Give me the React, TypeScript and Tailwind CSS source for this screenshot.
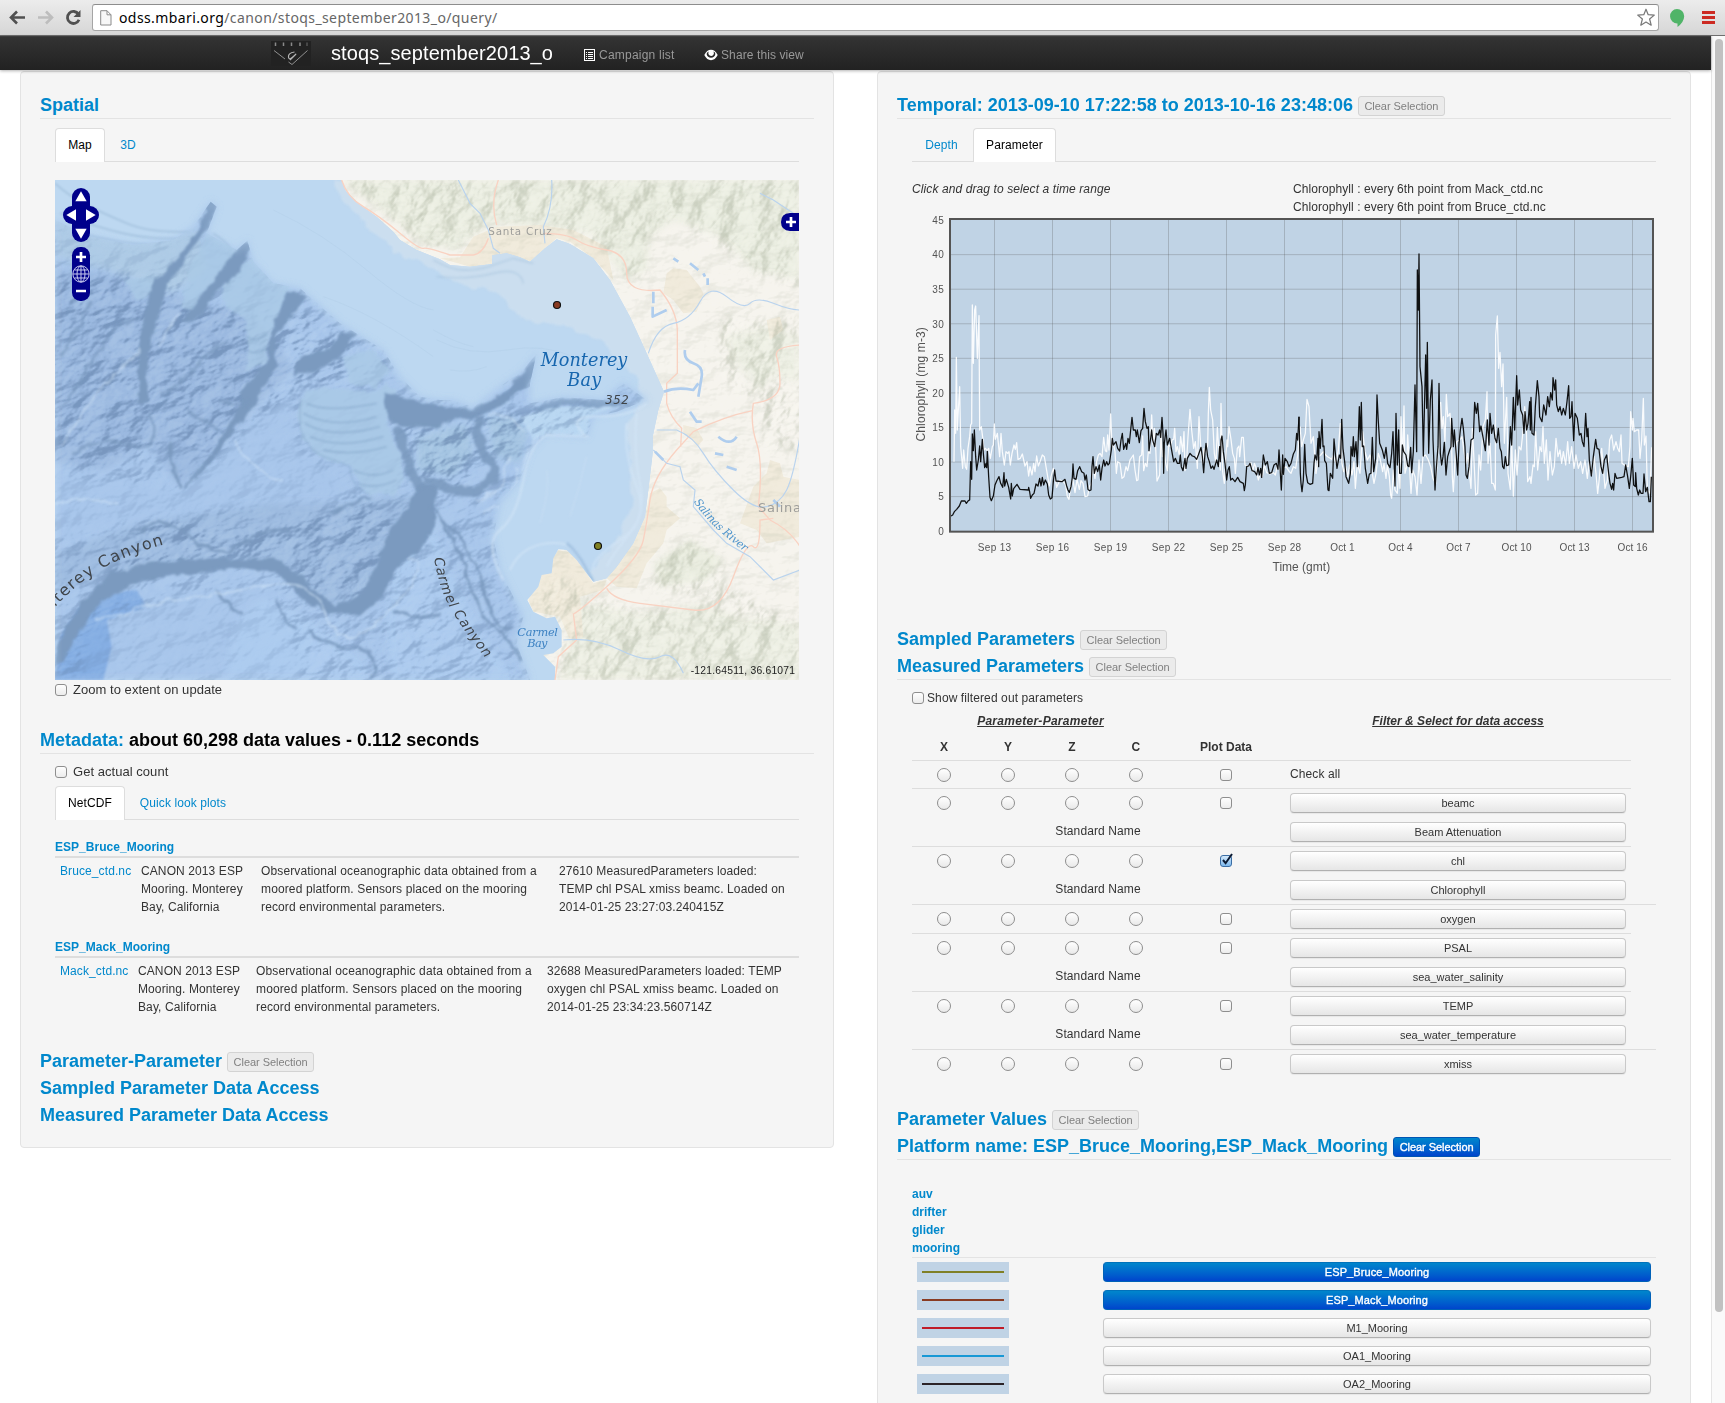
import React from "react";

const BLACK_A =
  "153,948 158,945 163,935 170,928 178,918 184,903 195,903 199,910 205,902 209,900 212,785 215,838 217,702 220,752 223,690 227,770 230,810 235,780 239,738 242,785 247,718 250,760 254,803 258,790 260,803 262,754 266,830 270,892 274,902 280,888 285,855 290,843 297,830 302,850 308,862 312,818 314,858 319,838 326,862 332,897 334,850 337,888 341,866 351,853 360,868 385,870 386,862 389,876 392,895 397,885 402,880 408,852 414,858 419,835 423,858 427,832 431,855 436,840 442,852 446,885 451,897 456,893 460,845 464,810 468,843 486,845 495,838 500,858 504,870 508,877 513,860 517,832 519,792 522,835 528,838 533,812 539,800 545,815 552,820 555,840 559,825 564,868 568,872 573,870 576,800 579,770 583,820 588,800 593,815 598,795 602,840 606,805 611,780 615,798 620,785 624,795 628,790 634,750 637,715 640,735 648,725 653,745 659,753 663,720 667,700 671,748 677,730 680,748 684,715 688,730 692,690 696,652 700,690 706,690 709,710 712,690 718,728 723,692 728,685 732,625 736,665 741,685 745,680 747,752 752,715 755,690 758,720 764,740 769,700 774,705 779,690 782,712 786,652 789,700 791,820 793,730 798,690 802,735 809,715 814,745 821,785 826,775 832,790 838,790 841,765 844,800 849,812 855,775 858,805 862,775 870,760 877,768 883,770 890,778 895,765 903,742 907,770 911,818 915,760 918,730 923,770 928,785 933,805 938,798 942,808 950,780 955,800 959,740 961,785 963,720 966,708 970,755 975,790 980,840 984,810 988,800 992,840 997,835 1005,845 1013,832 1020,845 1030,850 1033,872 1036,855 1040,800 1046,798 1050,790 1056,812 1064,815 1070,825 1074,803 1078,825 1082,805 1085,832 1088,790 1090,765 1096,795 1102,785 1108,820 1115,818 1122,795 1129,790 1134,808 1137,750 1140,800 1144,870 1148,765 1150,823 1155,775 1162,785 1167,800 1173,790 1180,762 1186,750 1190,700 1193,720 1197,650";
const BLACK_B =
  "-3,650 1,820 3,850 6,875 10,840 14,733 18,820 23,848 30,853 38,850 42,790 45,765 50,780 54,715 56,800 57,695 61,745 66,658 69,740 72,738 74,782 79,790 84,870 87,872 91,820 98,835 102,717 107,770 111,805 118,765 122,775 125,658 129,745 134,785 138,830 146,850 151,820 153,740 157,768 160,710 163,770 168,725 172,800 178,620 181,720 184,607 187,740 191,738 196,805 203,850 208,822 213,820 217,712 221,815 227,775 231,585 235,665 239,730 247,750 253,775 258,742 263,790 270,803 275,760 279,695 282,780 285,858 288,640 292,795 296,690 299,820 304,820 307,735 311,755 318,765 323,797 327,800 332,742 335,818 340,755 345,555 350,755 352,210 355,330 357,162 360,500 366,560 370,768 377,465 380,625 382,427 386,760 391,600 396,540 399,720 405,870 409,805 414,740 417,550 421,760 425,795 429,770 433,727 438,825 443,770 449,750 453,740 455,655 460,740 463,690 467,740 473,825 477,730 481,690 486,655 490,685 495,740 498,825 502,835 507,800 513,720 520,715 524,607 529,640 533,610 539,695 543,678 549,712 556,752 562,660 567,735 570,640 575,700 580,675 585,715 590,728 595,685 600,745 604,755 608,800 612,806 616,770 620,797 626,795 631,680 635,735 640,592 644,690 650,527 653,615 658,570 662,630 668,645 672,700 675,635 680,690 684,670 689,605 691,690 693,592 696,700 702,705 706,620 712,542 717,590 719,650 726,665 731,615 738,645 743,590 748,620 752,578 757,600 759,533 764,570 767,540 770,615 775,635 780,620 785,645 790,625 796,645 801,605 806,557 809,655 813,650 816,605 821,722 825,640 832,655 838,705 843,700 847,725 852,740 857,640 861,710 864,685 868,780 874,828 880,770 887,718 891,745 897,748 903,800 908,820 913,780 920,765 926,820 930,850 935,868 938,850 941,870 945,820 950,835 965,832 972,830 977,795 983,830 988,865 992,830 997,775 1001,855 1006,860 1007,818 1010,865 1015,885 1019,870 1023,880 1029,880 1032,822 1037,875 1042,862 1047,905 1051,905 1054,830";
const WHITE_A =
  "162,785 164,630 167,700 169,472 172,690 175,630 179,560 182,740 188,805 191,750 196,800 200,808 204,745 209,710 212,675 215,670 217,315 220,490 224,330 227,318 232,475 237,347 239,690 244,680 249,720 252,750 256,745 262,752 266,745 271,775 277,740 280,735 283,672 286,718 292,700 299,770 303,700 307,755 313,795 318,755 323,760 327,755 331,795 336,760 342,735 346,748 350,728 354,778 361,775 367,762 375,798 381,785 386,828 390,800 396,825 401,790 405,815 410,768 415,798 420,785 427,765 433,770 438,800 444,835 448,858 453,830 460,805 466,838 470,862 480,840 490,845 497,855 502,890 507,898 512,860 518,835 525,878 531,838 538,868 543,842 549,850 555,890 563,888 568,860 574,850 580,798 585,835 590,785 595,765 600,760 606,770 611,712 616,752 620,755 623,705 627,750 632,642 636,740 640,730 645,755 649,820 653,785 660,790 666,835 672,830 678,800 683,812 690,780 700,765 705,810 710,842 714,840 719,770 725,765 728,708 731,812 736,790 741,800 745,755 750,760 755,645 759,735 763,685 767,740 771,843 779,825 783,700 787,770 791,745 797,790 802,812 806,735 812,740 816,720 821,718 824,685 828,755 832,740 838,765 842,710 848,755 852,695 855,812 860,780 864,710 870,628 875,690 881,745 886,725 892,805 897,650 903,755 908,790 912,745 917,760 923,735 925,640 928,562 932,630 938,660 943,760 948,790 952,682 957,760 961,810 963,610 968,815 973,850 978,765 981,720 983,740 987,680 993,718 998,760 1003,775 1006,820 1012,745 1017,738 1019,770 1025,712 1030,712 1035,795 1045,800 1053,788 1058,815 1063,790 1067,800 1075,840 1081,820 1087,830 1093,795 1100,818 1110,822 1120,818 1126,825 1133,795 1140,812 1145,825 1150,805 1158,800 1168,815 1173,820 1180,800 1187,805 1193,765 1200,680";
const WHITE_B =
  "0,680 5,740 10,720 16,700 21,598 27,620 33,730 40,710 48,820 55,770 62,765 70,755 77,765 83,770 95,778 100,765 108,790 115,750 121,670 126,790 131,815 137,800 143,830 149,795 156,825 162,785 166,865 172,790 180,820 188,695 195,755 202,780 210,765 216,815 222,850 228,820 235,760 240,775 248,815 252,790 258,835 262,795 268,830 272,885 275,895 280,810 285,870 292,880 297,790 300,865 303,650 308,780 312,618 315,820 320,800 323,705 328,790 333,880 338,810 345,830 351,885 357,780 363,850 369,770 377,765 385,780 392,800 399,835 407,850 414,755 419,740 422,607 426,685 430,650 435,725 439,583 443,650 450,640 454,700 457,830 460,875 465,780 470,725 478,720 486,710 493,760 498,790 503,760 508,820 513,865 517,685 520,740 527,885 533,880 537,765 542,810 549,680 556,660 561,575 564,790 570,730 575,850 580,850 586,870 587,405 592,348 596,505 600,457 605,560 609,492 613,730 620,592 624,820 631,868 635,720 640,888 646,750 651,825 657,740 663,750 670,685 674,620 679,690 683,845 690,830 693,850 699,795 703,800 707,695 713,810 720,740 725,755 729,680 733,790 739,720 744,840 750,755 757,825 763,800 768,715 774,770 780,750 785,790 790,755 797,795 803,725 808,790 815,740 822,805 828,765 835,805 842,785 848,820 855,780 862,835 868,785 875,825 882,770 888,820 893,880 898,835 905,745 909,790 915,865 922,840 929,720 935,705 941,750 948,725 953,745 958,755 963,705 966,790 973,795 985,800 990,740 992,635 997,690 999,655 1003,695 1010,690 1016,690 1020,775 1025,720 1030,595 1033,735 1038,708 1042,870 1050,880 1055,742";

const Y_TICKS = [0, 5, 10, 15, 20, 25, 30, 35, 40, 45];
const X_TICKS = ["Sep 13", "Sep 16", "Sep 19", "Sep 22", "Sep 25", "Sep 28", "Oct 1", "Oct 4", "Oct 7", "Oct 10", "Oct 13", "Oct 16"];

function Chart() {
  return (
    <svg width="750" height="384" viewBox="36 48 2250 1152" className="block tracking-normal font-['Liberation_Sans',sans-serif]">
      <rect x="150" y="57" width="2109" height="938" fill="#c0d3e5" />
      <g stroke="#545454" strokeOpacity="0.27" strokeWidth="3">
        {Y_TICKS.slice(1, 9).map((v) => (
          <line key={v} x1="150" x2="2259" y1={993.5 - v * 20.74} y2={993.5 - v * 20.74} />
        ))}
        {X_TICKS.map((t, i) => (
          <line key={t} x1={283.5 + i * 174} x2={283.5 + i * 174} y1="57" y2="995" />
        ))}
      </g>
      <g fill="none" stroke="#ffffff" strokeOpacity="0.9" strokeWidth="3.8" strokeLinejoin="round">
        <polyline points={WHITE_A} />
        <polyline points={WHITE_B} transform="translate(1200 0)" />
      </g>
      <g fill="none" stroke="#000000" strokeOpacity="0.92" strokeWidth="3.8" strokeLinejoin="round">
        <polyline points={BLACK_A} />
        <polyline points={BLACK_B} transform="translate(1200 0)" />
      </g>
      <rect x="150" y="57" width="2109" height="938" fill="none" stroke="#545454" strokeWidth="6" />
      <g fill="#545454" fontSize="30">
        {Y_TICKS.map((v) => (
          <text key={v} x="132" y={1005 - v * 20.74} textAnchor="end" letterSpacing="0.8">
            {v}
          </text>
        ))}
        {X_TICKS.map((t, i) => (
          <text key={t} x={283.5 + i * 174} y="1053" textAnchor="middle" textLength={i < 6 ? 100 : i < 9 ? 73 : 90}>
            {t}
          </text>
        ))}
        <text x="1204" y="1112" textAnchor="middle" fontSize="36" textLength="173">
          Time (gmt)
        </text>
        <text transform="translate(75 553) rotate(-90)" textAnchor="middle" fontSize="36" textLength="343">
          Chlorophyll (mg m-3)
        </text>
      </g>
    </svg>
  );
}

const OCEAN =
  "M45 30H905L915 60 960 105 1010 140 1060 185 1080 210 1130 240 1200 268 1230 285 1290 290 1356 282 1357 256 1400 250 1440 262 1470 275 1515 235 1550 208 1590 222 1660 265 1710 330 1770 440 1820 550 1872 665 1855 720 1838 800 1838 850 1825 960 1815 1040 1780 1120 1730 1190 1700 1225 1660 1235 1640 1210 1610 1170 1580 1140 1555 1138 1540 1165 1535 1210 1505 1215 1495 1250 1462 1290 1480 1325 1520 1345 1545 1340 1565 1380 1565 1430 1540 1450 1510 1455 1545 1490 1545 1530H45Z";
const DEEP =
  "M45 150L150 200 280 225 400 210 460 170 512 95 530 110 500 190 590 240 622 212 640 275 700 340 780 355 900 460 1030 540 1080 620 1140 680 1200 690 1240 690 1300 712 1380 650 1450 600 1490 550 1470 640 1470 700 1570 682 1690 690 1750 640 1820 690 1730 725 1660 740 1640 800 1520 792 1470 840 1440 930 1380 1000 1360 1100 1380 1200 1450 1340 1430 1420 1470 1530H45Z";

function Terrain() {
  return (
    <>
      <defs>
        <clipPath id="oceanClip">
          <path transform="translate(-15 -10) scale(.33333)" d={OCEAN} />
        </clipPath>
        <clipPath id="deepClip">
          <path transform="translate(-15 -10) scale(.33333)" d={DEEP} />
        </clipPath>
        <filter id="soft8" x="-20%" y="-20%" width="140%" height="140%">
          <feGaussianBlur stdDeviation="10" />
        </filter>
        <filter id="soft3" x="-20%" y="-20%" width="140%" height="140%">
          <feGaussianBlur stdDeviation="3" />
        </filter>
        <filter id="rough" x="-10%" y="-10%" width="120%" height="120%" colorInterpolationFilters="sRGB">
          <feTurbulence type="fractalNoise" baseFrequency="0.025" numOctaves="3" seed="4" />
          <feDisplacementMap in="SourceGraphic" scale="26" xChannelSelector="R" yChannelSelector="G" />
          <feGaussianBlur stdDeviation="2.500" />
        </filter>
        <filter id="relief" x="0" y="0" width="100%" height="100%" colorInterpolationFilters="sRGB">
          <feTurbulence type="fractalNoise" baseFrequency="0.026 0.042" numOctaves="4" seed="11" result="n" />
          <feColorMatrix in="n" type="matrix" values="0 0 0 0 0 0 0 0 0 0 0 0 0 0 0 1 0 0 0 0" />
          <feDiffuseLighting surfaceScale="12" diffuseConstant="0.78" lightingColor="#ffffff" result="lit">
            <feDistantLight azimuth="240" elevation="42" />
          </feDiffuseLighting>
          <feColorMatrix in="lit" type="matrix" values="0 0 0 0 0.38 0 0 0 0 0.5 0 0 0 0 0.66 -1.9 0 0 0 0.94" result="dark" />
          <feColorMatrix in="lit" type="matrix" values="0 0 0 0 0.8 0 0 0 0 0.89 0 0 0 0 0.97 1.5 0 0 0 -0.85" result="light" />
          <feMerge>
            <feMergeNode in="dark" />
            <feMergeNode in="light" />
          </feMerge>
        </filter>
        <filter id="hills" x="0" y="0" width="100%" height="100%" colorInterpolationFilters="sRGB">
          <feTurbulence type="fractalNoise" baseFrequency="0.03 0.05" numOctaves="4" seed="23" result="n" />
          <feColorMatrix in="n" type="matrix" values="0 0 0 0 0 0 0 0 0 0 0 0 0 0 0 1 0 0 0 0" />
          <feDiffuseLighting surfaceScale="9" diffuseConstant="0.78" lightingColor="#ffffff" result="lit">
            <feDistantLight azimuth="225" elevation="42" />
          </feDiffuseLighting>
          <feColorMatrix in="lit" type="matrix" values="0 0 0 0 0.65 0 0 0 0 0.68 0 0 0 0 0.6 -1.6 0 0 0 0.84" result="dark" />
          <feColorMatrix in="lit" type="matrix" values="0 0 0 0 1 0 0 0 0 1 0 0 0 0 0.97 1.7 0 0 0 -0.92" result="light" />
          <feMerge>
            <feMergeNode in="dark" />
            <feMergeNode in="light" />
          </feMerge>
        </filter>
        <mask id="hillMask">
          <path
            transform="translate(-15 -10) scale(.33333)"
            fill="#fff"
            filter="url(#soft8)"
            d="M905 30H2280V360L2140 310 2060 240 1990 200 1930 150 1860 160 1800 260 1830 320 1780 340 1700 250 1640 210 1500 150 1350 150 1270 220 1150 230 1020 120ZM2040 440L2160 450 2280 430V860L2240 830 2180 860 2150 700 2080 660 2030 600ZM1850 1170L1960 1110 2050 1170 2060 1260 1960 1280 1830 1260ZM1470 1290L1540 1220 1600 1230 1650 1270 1800 1320 1960 1310 2060 1240 2160 1300 2280 1350V1530H1540L1580 1380Z"
          />
        </mask>
        <mask id="reliefMask" maskUnits="userSpaceOnUse" x="0" y="0" width="744" height="500">
          <rect width="744" height="500" fill="#999" />
          <g transform="translate(-15 -10) scale(.33333)" filter="url(#soft8)">
            <path fill="#fff" d="M45 330L360 340 500 420 740 400 900 480 1040 560 1000 640 800 640 640 740 500 860 400 800 300 860 45 900ZM320 1050L700 1080 1000 990 1060 1060 980 1280 840 1280 720 1150 400 1180 200 1230ZM1060 760L1330 740 1500 720 1480 800 1320 860 1280 960 1130 930Z" />
            <path fill="#444" d="M45 920L420 960 560 840 740 680 780 850 940 950 860 1010 500 1020 300 1060 45 1100ZM780 660H1060V960H960L800 840ZM130 1400L300 1300 640 1240 720 1300 780 1530H130ZM45 150H640L600 280 480 330 300 310 45 280Z" />
          </g>
        </mask>
      </defs>

      <rect width="744" height="500" fill="#f6f4ee" />

      <g transform="translate(-15 -10) scale(.33333)">
        <g filter="url(#soft8)" fill="#e9ecdf">
          <path d="M905 30H2280V330L2140 300 2040 200 1900 150 1830 200 1820 300 1760 330 1650 190 1350 160 1250 240 1150 220Z" opacity=".8" />
          <path d="M2050 500L2200 460 2280 500V640L2200 620 2160 660 2080 580Z" opacity=".6" />
          <path d="M1840 1180L1950 1110 2050 1170 2000 1230 1860 1250Z" />
          <path d="M1500 1270L1570 1230 1630 1300 1800 1330 1980 1300 2100 1340 2280 1360V1530H1560L1590 1380Z" opacity=".7" />
        </g>
        <g fill="#f0eadb">
          <path d="M1200 265L1260 262 1300 200 1370 170 1500 165 1600 180 1700 230 1720 330 1660 265 1590 215 1550 205 1470 275 1400 250 1356 258 1356 282 1290 290Z" />
          <path d="M1880 310L1900 295 1940 300 1980 350 1990 370 1970 425 1930 430 1900 390 1870 370Z" />
          <path d="M1830 970L1860 955 1880 980 1880 1010 1920 1045 1880 1080 1870 1120 1820 1180 1790 1255 1730 1250 1700 1225 1780 1120 1815 1040Z" />
          <path d="M2140 950L2180 910 2190 870 2220 880 2230 920 2280 930V1100L2180 1120 2150 1080 2100 1060Z" />
          <path d="M1555 1140L1600 1150 1640 1210 1660 1240 1700 1230 1690 1260 1620 1280 1630 1400 1590 1410 1560 1340 1480 1325 1465 1290 1500 1215Z" />
          <path d="M1930 765L1970 775 1990 810 1975 825 1930 790Z" />
          <path d="M2180 450L2220 440 2230 480 2190 510Z" />
        </g>
      </g>
      <g opacity=".18">
        <rect width="744" height="500" filter="url(#hills)" />
      </g>
      <g mask="url(#hillMask)" opacity=".5">
        <g transform="rotate(-50 560 80)">
          <rect x="50" y="-300" width="1000" height="900" filter="url(#hills)" />
        </g>
      </g>

      <g transform="translate(-15 -10) scale(.33333)">
        <path d={OCEAN} fill="#bdd8f1" />
      </g>
      <g clipPath="url(#oceanClip)">
        <g transform="translate(-15 -10) scale(.33333)">
          <path
            d="M880 30L900 80 960 150 1060 240 1200 305 1240 340 1370 365 1430 430 1460 455 1570 465 1680 510 1720 560 1790 620 1810 690 1760 760 1770 880 1775 1000 1730 1110 1650 1200 1690 1300 1900 1200 1950 600 1600 150 1300 240 1100 200 950 30Z"
            fill="#cbdeef"
            filter="url(#rough)"
          />
          <path d="M1180 270Q1240 305 1290 300T1360 285L1420 265 1480 280M1190 320Q1280 330 1360 310T1450 340" fill="none" stroke="#a5c3dd" strokeWidth="5" opacity=".5" filter="url(#soft3)" />
          <path d="M1180 480Q1250 520 1300 530M1190 510Q1290 560 1400 540T1600 560M1230 600Q1290 610 1340 590M700 120Q850 190 980 300T1180 420M850 380Q1000 430 1180 560" fill="none" stroke="#aecae5" strokeWidth="3" opacity=".35" />
          <path d={DEEP} fill="#a8c6eb" filter="url(#soft8)" />
          <g fill="none" stroke="#88a9c8" strokeWidth="5" opacity=".45" filter="url(#soft3)">
            <path d="M45 40Q90 80 140 105T260 160 450 185M60 130Q160 170 250 190T440 205M45 165Q170 210 300 222T460 225M45 200Q150 250 260 245T430 250M45 240Q160 280 260 265T400 275M45 275Q160 300 250 290T380 300" />
            <path d="M520 190Q600 240 560 270M500 240Q560 250 590 260M490 280Q540 300 560 290" />
          </g>
        </g>
        <g clipPath="url(#deepClip)">
          <g transform="translate(-15 -10) scale(.33333)">
            <path d="M45 300L200 310 380 350 460 400 620 420 700 500 760 600 640 720 520 860 420 950 320 820 200 900 45 880Z" fill="#9bb9e0" filter="url(#soft8)" />
            <path d="M500 1030L700 1000 900 1000 1050 980 1130 980 1040 1180 950 1290 870 1320 760 1230 700 1170 500 1180 300 1200 200 1230 45 1250V1150L300 1060Z" fill="#9dbbe0" filter="url(#soft8)" />
            <path d="M45 1530L60 1400 120 1310 200 1270 290 1260 320 1310 200 1350 215 1430 190 1530Z" fill="#85aee3" filter="url(#soft3)" />
            <path d="M45 120L300 210 480 180 500 300 400 370 200 300 45 260Z" fill="#aecbe6" filter="url(#soft8)" />
            <path d="M570 1400Q640 1270 700 1290T900 1420 970 1530H560Z M1060 1200L1170 1040 1230 1200 1330 1400 1430 1530H1050L1040 1340Z" fill="#afcef1" filter="url(#soft8)" opacity=".7" />
            <path d="M1200 780L1280 760 1300 850 1240 920 1130 900 1130 800ZM1340 740L1420 740 1470 780 1440 880 1360 860Z" fill="#a4c4e2" filter="url(#soft8)" />
            <path d="M1540 710L1740 705 1650 740 1640 800 1520 792 1480 810 1440 740Z" fill="#b9d7f2" filter="url(#soft3)" />
          </g>
          <g opacity=".62" mask="url(#reliefMask)">
            <g transform="rotate(-22 200 250)">
              <rect x="-350" y="-250" width="1250" height="1000" filter="url(#relief)" />
            </g>
          </g>
          <g transform="translate(-15 -10) scale(.33333)">
            <g fill="#aacae6" filter="url(#rough)" opacity=".75">
              <path d="M780 720Q770 660 860 655L980 665 1040 640 1070 660 1040 760 1080 850 1100 930 1060 980 980 970 930 890 840 860 790 800Z" />
              <path d="M450 300L490 220 540 110 545 190 600 240 560 290 510 350 480 430 420 420ZM570 300L640 260 750 350 720 440 690 500 680 580 620 600 620 450 540 390Z" />
              <path d="M250 330L350 320 370 370 290 390ZM910 560L1000 540 1050 600 1000 650 930 640Z" />
            </g>
            <g fill="none" stroke="#7d9fc2" strokeWidth="4" opacity=".6" filter="url(#soft3)">
              <path d="M800 700Q860 730 1010 700M790 730Q880 780 1010 740M795 760Q880 810 1020 770M810 800Q900 840 1030 800M850 840Q940 860 1040 830M940 900Q1000 930 1060 900M950 940Q1010 960 1070 930M620 540Q650 560 680 530M620 500Q650 520 680 490" />
              <path d="M780 680V770Q800 850 880 870L930 890Q930 950 990 975" opacity=".7" />
            </g>
            <g fill="#7b9abf" stroke="#7b9abf" strokeWidth="6" strokeLinejoin="round" filter="url(#rough)">
              <path d="M505 105L530 95 515 150 450 240 400 310 370 370 360 420 325 520 318 620 322 690 300 700 295 560 310 460 345 340 420 260 480 170Z" />
              <path d="M610 220L632 230 600 300 540 350 510 390 490 430 430 455 450 430 500 360 560 280Z" />
              <path d="M745 365L790 375 755 440 710 490 700 600 640 700 570 790 520 860 470 920 520 850 590 730 620 640 690 570 695 480Z" />
              <path d="M905 485L945 495 895 560 850 590 760 615 790 560 870 540Z" />
              <path d="M1030 665L1085 685 1205 712 1300 722 1400 662 1490 572 1475 625 1415 685 1320 735 1270 740 1200 765 1130 765 1080 765 1050 750Z" />
              <path d="M1185 950L1180 1050 1145 1130 1070 1190 1025 1280 960 1335 870 1328 790 1285 720 1205 600 1190 400 1213 280 1240 180 1295 120 1375 65 1470 45 1480 68 1390 135 1290 215 1215 330 1180 540 1170 700 1165 780 1225 880 1308 950 1285 1005 1200 1050 1080 1110 1015 1130 950Z" />
              <path d="M1480 710L1570 690 1720 692 1770 706 1640 710 1560 705 1480 722Z" opacity=".8" />
            </g>
            <g fill="none" stroke="#7b9abf" filter="url(#rough)">
              <path d="M1318 735Q1306 830 1345 865T1345 940 1240 958 1150 935M1070 770Q1100 870 1140 960" strokeWidth="28" opacity=".9" />
              <path
                d="M425 950Q385 895 395 815M435 950Q505 875 565 795M305 1085Q365 1025 425 1085T565 1145M565 1145Q645 1085 745 1075M875 1035Q925 995 995 980M705 1285Q745 1365 765 1375M525 1265Q565 1305 605 1335M805 1385Q865 1435 945 1435T995 1530M1175 1005Q1255 1115 1285 1225T1375 1385 1445 1475M1205 1045Q1295 1125 1335 1265T1425 1375M1065 1325Q1125 1345 1205 1335"
                strokeWidth="8"
              />
              <path d="M65 555Q115 475 155 395M65 715Q125 635 165 555T285 445M95 855Q185 795 275 825T335 725M365 675Q425 645 475 585T565 515M445 715Q505 775 555 785M535 695Q585 715 625 685" strokeWidth="8" opacity=".8" />
            </g>
            <g fill="none" stroke="#cfe3f7" strokeWidth="6" opacity=".6" filter="url(#rough)">
              <path d="M355 535Q385 475 415 425M65 825Q155 675 235 605T295 535M725 935Q605 875 585 815M45 1005Q145 975 235 1005M165 1355Q305 1305 445 1285T705 1245 865 1345 1045 1325 1105 1165M1345 735Q1405 725 1445 785M1405 855Q1395 975 1305 995M1425 895Q1445 995 1335 1025M1505 785Q1465 825 1445 925T1375 1075" />
            </g>
          </g>
        </g>
        <g transform="translate(-15 -10) scale(.33333)">
          <path d={DEEP} fill="none" stroke="#bad6f1" strokeWidth="12" opacity=".4" filter="url(#soft8)" />
          <g fill="none" stroke="#d4e6f7" strokeWidth="7" opacity=".6" filter="url(#soft3)">
            <path d="M1820 700Q1770 740 1670 740T1640 800L1520 795Q1470 820 1450 930T1380 1080 1390 1230M1760 760Q1750 850 1790 950T1740 1110 1660 1200M1790 730Q1780 850 1800 940T1770 1090 1700 1190M1410 1200Q1440 1130 1520 1120T1620 1170L1650 1220" />
            <path d="M1640 860Q1620 950 1590 1040M1520 900Q1530 960 1500 1060" strokeWidth="4" opacity=".6" />
          </g>
          <path d="M1580 1120Q1610 1140 1640 1200L1660 1235" fill="none" stroke="#8bb0d6" strokeWidth="8" opacity=".6" filter="url(#soft3)" />
        </g>
      </g>

      <g transform="translate(-15 -10) scale(.33333)" fill="none">
        <path
          d="M905 30Q920 80 970 110T1080 190 1150 235 1230 255L1300 255Q1330 250 1345 205M1375 30Q1350 100 1370 165M1510 190Q1580 190 1610 210T1700 240 1760 310 1860 360Q1910 420 1912 480V610L1880 640V700Q1890 740 1925 775L1922 830M1960 785Q2050 740 2137 722M2280 525Q2200 530 2210 560T2220 640 2140 700Q2130 760 2150 820T2155 1010L2190 1050Q2250 1080 2280 1130M1960 785L1910 840Q1840 920 1830 990T1810 1110 1700 1250 1600 1330L1610 1410 1555 1460 1545 1530M1700 1255Q1720 1290 1800 1300T1960 1320 2080 1220 2140 1130 2160 1050L2200 1045"
          stroke="#f9d2c2"
          strokeWidth="4"
        />
        <path
          d="M1255 30L1290 100 1320 130 1345 180 1360 235 1380 250M1535 30Q1540 110 1510 170L1515 220M1825 550Q1850 470 1900 460T1980 395 2060 380 2130 400 2200 400 2280 420M1850 780H1910Q1960 800 1990 850T2080 960 2180 1010 2240 960 2280 800M1840 840L1880 880 1920 890 1930 930 1965 960 1960 1010 2020 1080 2060 1120 2130 1160 2200 1230 2280 1200M1570 1410Q1660 1400 1740 1440T1860 1460 1930 1510M2160 70L2200 90 2260 130"
          stroke="#b9d3ee"
          strokeWidth="3.5"
        />
        <path
          d="M1872 665Q1910 650 1960 660L1975 640M1935 540Q1930 570 1960 580T1985 620 1975 680M1840 365V400M1838 410V440L1880 420M1950 280L1975 300M1990 310L1995 320M2003 325V345M1900 265L1915 275M1950 725L1970 755 1985 755M2035 800Q2070 830 2090 800M2025 850L2050 855M2060 890L2090 900M1845 845L1870 870M2200 990L2220 1010"
          stroke="#afcdee"
          strokeWidth="8"
          strokeLinejoin="round"
        />
      </g>
    </>
  );
}

function MapView() {
  return (
    <svg width="744" height="500" viewBox="0 0 744 500" className="mt-[18px] block tracking-normal">
      <Terrain />
      <g transform="translate(-15 -10) scale(.33333)">
        <defs>
          <path id="montereyCanyon" d="M34 1325Q110 1235 200 1188T430 1108" />
          <path id="carmelCanyon" d="M1182 1165Q1200 1270 1246 1340T1342 1470" />
          <path id="salinasRiver" d="M1962 995Q2000 1060 2120 1150" />
        </defs>
        <g fill="#9d9d9a" className="font-['DejaVu_Sans',sans-serif]">
          <text x="1345" y="195" fontSize="31" textLength="190">Santa Cruz</text>
          <text x="2154" y="1025" fontSize="39" letterSpacing="2">Salina</text>
        </g>
        <g fill="#1766ae" className="font-['DejaVu_Serif',serif] italic">
          <text x="1502" y="588" fontSize="53" textLength="260">Monterey</text>
          <text x="1582" y="648" fontSize="53" textLength="102">Bay</text>
          <text x="1432" y="1398" fontSize="34" textLength="122" fill="#3d82c2">Carmel</text>
          <text x="1462" y="1431" fontSize="34" textLength="60" fill="#3d82c2">Bay</text>
          <text fontSize="33" fill="#4e94cc">
            <textPath href="#salinasRiver" textLength="215">Salinas River</textPath>
          </text>
        </g>
        <g fill="#3f4449" className="font-['DejaVu_Sans',sans-serif]">
          <text x="1696" y="702" fontSize="35" textLength="70" className="italic">352</text>
          <text fontSize="48" letterSpacing="4">
            <textPath href="#montereyCanyon">nterey Canyon</textPath>
          </text>
          <text fontSize="41" className="italic">
            <textPath href="#carmelCanyon" textLength="342">Carmel Canyon</textPath>
          </text>
        </g>
        <circle cx="1551" cy="405" r="10.5" fill="#893b22" stroke="#111" strokeWidth="3.5" />
        <circle cx="1674" cy="1128" r="10.5" fill="#808022" stroke="#111" strokeWidth="3.5" />
        <text x="2265" y="1511" textAnchor="end" fontSize="31" fill="#222" textLength="313" className="font-['Liberation_Sans',sans-serif]">
          -121.64511, 36.61071
        </text>

        <g fill="#00008b">
          <rect x="96" y="54" width="54" height="162" rx="27" />
          <rect x="69" y="108" width="108" height="54" rx="27" />
          <rect x="96" y="231" width="54" height="162" rx="25" />
          <path d="M2277 129H2250Q2223 131 2223 156T2250 183H2277Z" />
        </g>
        <g fill="#fff">
          <path d="M123 64L140 94H106ZM123 206L140 176H106ZM79 135L108 118V152ZM167 135L138 118V152Z" />
          <path d="M119 246H127V257H138V265H127V276H119V265H108V257H119ZM108 359H138V367H108Z" />
          <path d="M2249 141H2257V152H2268V160H2257V171H2249V160H2238V152H2249Z" />
        </g>
        <g fill="none" stroke="#c9cbee" strokeWidth="3">
          <circle cx="123" cy="312" r="24.500" />
          <ellipse cx="123" cy="312" rx="12" ry="24" />
          <path d="M123 288V336M99 312H147M103 300H143M103 324H143" />
        </g>
      </g>
    </svg>
  );
}

function ClearButton({ active = false }: { active?: boolean }) {
  return (
    <button
      className={
        active
          ? "ml-[5px] mt-[2px] h-5 w-[87px] shrink-0 rounded-[3px] border border-[#0055b3] bg-linear-to-b from-[#0086cc] to-[#0044cc] text-[11px] leading-[18px] tracking-[-0.04px] text-white [-webkit-text-stroke:0.35px_white]"
          : "ml-[5px] mt-[2px] h-5 w-[87px] shrink-0 rounded-[3px] border border-[#d3d3d3] bg-[#ebebeb] text-[11px] leading-[18px] tracking-[-0.04px] text-[#808080]"
      }
    >
      Clear Selection
    </button>
  );
}

function Heading({ children, line = false, clear, className = "" }: { children: React.ReactNode; line?: boolean; clear?: "off" | "on"; className?: string }) {
  return (
    <div className={`${className} flex items-center text-[18px] font-bold leading-[27px] tracking-normal whitespace-nowrap text-[#0088cc] ${line ? "h-7 border-b border-[#e3e3e3]" : "h-[27px]"}`}>
      <h3 className="pt-[2px]">{children}</h3>
      {clear && (
        <span className="flex font-normal">
          <ClearButton active={clear === "on"} />
        </span>
      )}
    </div>
  );
}

function Check({ checked = false }: { checked?: boolean }) {
  return (
    <span className={`relative block size-[12px] rounded-[3px] border ${checked ? "border-[#3b6ea5] bg-linear-to-b from-[#d4e9fb] to-[#7db9ee]" : "border-[#8e8e8e] bg-linear-to-b from-[#fefefe] to-[#ececec]"}`}>
      {checked && (
        <svg className="absolute -top-[4px] -left-px" width="14" height="15" viewBox="0 0 14 15">
          <path d="M3 8L5.600 11.200 12 2" fill="none" stroke="#0b1a33" strokeWidth="2" />
        </svg>
      )}
    </span>
  );
}

function Radio() {
  return <span className="block size-[14px] rounded-full border border-[#8e8e8e] bg-linear-to-b from-white to-[#e9e9e9]" />;
}

function Tabs({ items, active, className }: { items: { label: string; width: string }[]; active: number; className: string }) {
  return (
    <div className={`${className} flex h-[34px] border-b border-[#dddddd] text-[12px] leading-[18px]`}>
      {items.map((t, i) => (
        <div
          key={t.label}
          className={`${t.width} shrink-0 pt-[7px] text-center ${i === active ? "h-[34px] rounded-t-[4px] border border-b-0 border-[#dddddd] bg-white text-black" : "h-[33px] border border-transparent text-[#0088cc]"}`}
        >
          {t.label}
        </div>
      ))}
    </div>
  );
}

function WideButton({ label, primary = false, width }: { label: string; primary?: boolean; width: string }) {
  return (
    <button
      className={
        primary
          ? `${width} block h-5 rounded-[4px] border border-[#0061b8] border-t-[#0072bb] bg-linear-to-b from-[#0086cc] to-[#0044cc] text-[11px] leading-[18px] text-white [-webkit-text-stroke:0.35px_white]`
          : `${width} block h-5 rounded-[4px] border border-[#c9c9c9] border-b-[#b0b0b0] bg-linear-to-b from-white to-[#e6e6e6] text-[11px] leading-[18px] tracking-normal text-[#333] shadow-[0_1px_1px_rgba(0,0,0,0.06)]`
      }
    >
      {label}
    </button>
  );
}

const DATASETS = [
  {
    platform: "ESP_Bruce_Mooring",
    gap: "mt-[18px]",
    cols: "grid-cols-[81px_120px_298px_240px]",
    file: "Bruce_ctd.nc",
    title: ["CANON 2013 ESP", "Mooring. Monterey", "Bay, California"],
    info: ["27610 MeasuredParameters loaded:", "TEMP chl PSAL xmiss beamc. Loaded on", "2014-01-25 23:27:03.240415Z"],
  },
  {
    platform: "ESP_Mack_Mooring",
    gap: "mt-[22px]",
    cols: "grid-cols-[78px_118px_291px_250px]",
    file: "Mack_ctd.nc",
    title: ["CANON 2013 ESP", "Mooring. Monterey", "Bay, California"],
    info: ["32688 MeasuredParameters loaded: TEMP", "oxygen chl PSAL xmiss beamc. Loaded on", "2014-01-25 23:34:23.560714Z"],
  },
];
const ABSTRACT = ["Observational oceanographic data obtained from a", "moored platform. Sensors placed on the mooring", "record environmental parameters."];

function Lines({ rows }: { rows: string[] }) {
  return (
    <div className="whitespace-nowrap">
      {rows.map((r) => (
        <div key={r}>{r}</div>
      ))}
    </div>
  );
}

const PARAMS: { name: string; std?: string; checked?: boolean; wide?: boolean }[] = [
  { name: "beamc", std: "Beam Attenuation" },
  { name: "chl", std: "Chlorophyll", checked: true },
  { name: "oxygen", wide: true },
  { name: "PSAL", std: "sea_water_salinity" },
  { name: "TEMP", std: "sea_water_temperature" },
  { name: "xmiss", wide: true },
];

const PLATFORMS = [
  { name: "ESP_Bruce_Mooring", color: "bg-[#808026]", on: true },
  { name: "ESP_Mack_Mooring", color: "bg-[#893b22]", on: true },
  { name: "M1_Mooring", color: "bg-[#c01c28]", on: false },
  { name: "OA1_Mooring", color: "bg-[#1898d5]", on: false },
  { name: "OA2_Mooring", color: "bg-[#2b2328]", on: false },
];

function Selectors({ checked }: { checked?: boolean }) {
  return (
    <div className="grid h-7 grid-cols-[64px_64px_64px_64px_116px] place-items-center">
      <Radio />
      <Radio />
      <Radio />
      <Radio />
      <Check checked={checked} />
    </div>
  );
}

function BrowserBar() {
  return (
    <div className="flex h-9 items-center border-b border-[#6f6f6f] bg-linear-to-b from-[#ececec] to-[#d6d6d6]">
      <svg width="92" height="35" viewBox="0 0 92 35" fill="none" strokeWidth="2.600">
        <path d="M25 17.500H12M17 11.500L11 17.500 17 23.500" stroke="#505050" />
        <path d="M38 17.500H51M46 11.500L52 17.500 46 23.500" stroke="#bdbdbd" />
        <path d="M78.500 14.200A6 6 0 1 0 79 19.800" stroke="#505050" strokeWidth="2.800" />
        <path d="M80.500 10V17H73.500Z" fill="#505050" />
      </svg>
      <div className="flex h-[27px] w-[1567px] items-center rounded-[3px] border border-[#a5a5a5] border-t-[#8d8d8d] bg-white">
        <svg width="12" height="16" viewBox="0 0 12 16" className="ml-[7px] shrink-0" fill="#f7f7f7" stroke="#8a8a8a" strokeWidth="1">
          <path d="M.7.7H7L11 4.800V15H.7ZM7 .7V4.800H11" />
        </svg>
        <div className="ml-[7px] grow font-['Noto_Sans',sans-serif] text-[14px] tracking-[0.4px] whitespace-nowrap text-[#666]">
          <span className="text-black">odss.mbari.org</span>/canon/stoqs_september2013_o/query/
        </div>
        <svg width="20" height="19" viewBox="0 0 20 19" className="mr-[2px]" fill="#fff" stroke="#777" strokeWidth="1.200" strokeLinejoin="round">
          <path d="M10 1.200L12.200 6.700 18.300 7.100 13.600 11 15.200 17.200 10 14 4.800 17.200 6.400 11 1.700 7.100 7.800 6.700Z" />
        </svg>
      </div>
      <svg width="60" height="35" viewBox="0 0 60 35" className="ml-[2px]">
        <path d="M16 9A7.200 7.200 0 0 1 23.200 16.200Q23 22 16.500 27V23.400A7.200 7.200 0 0 1 16 9Z" fill="#50b468" />
        <path d="M41 11H54V14H41ZM41 16H54V19H41ZM41 21H54V24H41Z" fill="#cc2a22" />
      </svg>
    </div>
  );
}

function NavBar() {
  return (
    <div className="relative z-10 flex h-[34px] w-[1711px] items-center border-t border-[#3c3c3c] bg-linear-to-b from-[#333333] to-[#222222] shadow-[0_1px_3px_rgba(0,0,0,0.3)]">
      <svg width="40" height="25" viewBox="0 0 40 25" className="-mt-px ml-[271px] shrink-0">
        <rect width="40" height="25" fill="#222" />
        <path d="M4.500 1.500V5M12.500 1.500V5M20.500 1.500V5M29 1.500V5" stroke="#8a8a8a" strokeWidth="1.500" />
        <path d="M36 1.500V5" stroke="#555" strokeWidth="1.500" />
        <path d="M3 9.500L14 18M36.500 9.500L21 23.500 17.500 21" stroke="#909090" strokeWidth="1" fill="none" />
        <path d="M23.500 11Q17 12 17.500 16T23 15 19 19" stroke="#b5b5b5" strokeWidth="1.200" fill="none" />
      </svg>
      <div className="-mt-[2px] ml-5 w-[253px] text-[20px] leading-[30px] tracking-[0.09px] text-white">stoqs_september2013_o</div>
      <svg width="11" height="12" viewBox="0 0 11 12" className="mt-[3px]">
        <rect width="11" height="12" fill="#fff" />
        <rect x="1" y="1" width="9" height="10" fill="#2a2a2a" />
        <path d="M2 3.500H3M4 3.500H9M2 5.500H3M4 5.500H9M2 7.500H3M4 7.500H9M2 9.500H3M4 9.500H9" stroke="#fff" strokeWidth="1" />
      </svg>
      <div className="ml-1 mt-[3px] w-[105px] text-[12px] tracking-[0.22px] text-[#999999]">Campaign list</div>
      <svg width="14" height="12" viewBox="0 0 14 12" className="mt-[3px]">
        <path d="M.3 6Q3 .8 7 .8T13.700 6Q11 11.200 7 11.200T.3 6Z" fill="#fff" />
        <path d="M2.600 5Q3.500 8.800 7 8.800T11.400 5Q11 3 9.500 2.600 10.500 4.500 9.300 6 7.800 7.400 5.600 6.600 3.700 5.400 4.500 2.600 3 3.200 2.600 5Z" fill="#2a2a2a" />
      </svg>
      <div className="ml-[3px] mt-[3px] text-[12px] text-[#999999]">Share this view</div>
    </div>
  );
}

export default function App() {
  return (
    <div className="flex h-[1403px] w-[1725px] flex-col overflow-hidden bg-white font-['Liberation_Sans',Arial,sans-serif] text-[12px] leading-[18px] tracking-[0.1px] text-[#333333]">
      <BrowserBar />
      <div className="flex min-h-0 grow">
        <div className="w-[1711px] shrink-0">
          <NavBar />
          <div className="flex items-start gap-[43px] pt-px pl-5">
            <section className="h-[1077px] w-[814px] rounded-[4px] border border-[#e3e3e3] bg-[#f5f5f5] px-[19px] pt-[19px]">
              <Heading line>Spatial</Heading>
              <div className="px-[15px]">
                <Tabs className="mt-[9px]" active={0} items={[{ label: "Map", width: "w-[50px]" }, { label: "3D", width: "w-[46px]" }]} />
                <MapView />
                <label className="mt-px flex h-[18px] items-center gap-[6px] text-[13px] tracking-[0.04px]">
                  <Check />
                  Zoom to extent on update
                </label>
              </div>

              <Heading line className="mt-[27px]">
                Metadata: <span className="text-black">about 60,298 data values - 0.112 seconds</span>
              </Heading>
              <div className="px-[15px]">
                <label className="mt-[9px] flex h-[18px] items-center gap-[6px] text-[13px] tracking-[0.04px]">
                  <Check />
                  Get actual count
                </label>
                <Tabs className="mt-[5px]" active={0} items={[{ label: "NetCDF", width: "w-[70px]" }, { label: "Quick look plots", width: "w-[116px]" }]} />
                {DATASETS.map((d) => (
                  <div key={d.file} className={d.gap}>
                    <div className="h-5 border-b-2 border-[#dddddd] font-bold tracking-[0.03px] text-[#0088cc]">{d.platform}</div>
                    <div className={`mt-1 grid pl-[5px] ${d.cols}`}>
                      <span className="text-[#0088cc]">{d.file}</span>
                      <Lines rows={d.title} />
                      <div className="tracking-[0.13px]">
                        <Lines rows={ABSTRACT} />
                      </div>
                      <Lines rows={d.info} />
                    </div>
                  </div>
                ))}
              </div>

              <Heading className="mt-[31px]" clear="off">Parameter-Parameter</Heading>
              <Heading>Sampled Parameter Data Access</Heading>
              <Heading>Measured Parameter Data Access</Heading>
            </section>

            <section className="h-[1400px] w-[814px] rounded-[4px] border border-[#e3e3e3] bg-[#f5f5f5] px-[19px] pt-[19px]">
              <Heading line clear="off">Temporal: 2013-09-10 17:22:58 to 2013-10-16 23:48:06</Heading>
              <div className="px-[15px]">
                <Tabs className="mt-[9px]" active={1} items={[{ label: "Depth", width: "w-[61px] pr-[2px]" }, { label: "Parameter", width: "w-[83px]" }]} />
                <div className="mt-[18px] grid grid-cols-[381px_1fr]">
                  <em>Click and drag to select a time range</em>
                  <div className="tracking-[0.07px]">
                    <Lines rows={["Chlorophyll : every 6th point from Mack_ctd.nc", "Chlorophyll : every 6th point from Bruce_ctd.nc"]} />
                  </div>
                </div>
                <Chart />
              </div>

              <Heading className="mt-[25px]" clear="off">Sampled Parameters</Heading>
              <Heading line clear="off">Measured Parameters</Heading>
              <div className="px-[15px]">
                <label className="mt-[9px] flex h-[18px] items-center gap-[3px]">
                  <Check />
                  Show filtered out parameters
                </label>
                <div className="mt-[5px] grid h-[18px] grid-cols-[257px_116px_346px] text-center font-bold italic underline">
                  <span className="tracking-[0.28px]">Parameter-Parameter</span>
                  <span />
                  <span className="tracking-[0.03px]">Filter &amp; Select for data access</span>
                </div>
                <div className="grid h-[30px] grid-cols-[64px_64px_64px_64px_116px] pt-2 text-center font-bold">
                  <span>X</span>
                  <span>Y</span>
                  <span>Z</span>
                  <span>C</span>
                  <span className="tracking-normal">Plot Data</span>
                </div>
                <div className="flex h-7 w-[719px] border-t border-[#dddddd]">
                  <Selectors />
                  <span className="ml-[6px] pt-1">Check all</span>
                </div>
                {PARAMS.map((p) => (
                  <div key={p.name} className={`${p.wide ? "w-[744px]" : "w-[719px]"} border-t border-[#dddddd]`}>
                    <div className="flex h-7">
                      <Selectors checked={p.checked} />
                      <div className="ml-[6px] pt-1">
                        <WideButton width="w-[336px]" label={p.name} />
                      </div>
                    </div>
                    {p.std && (
                      <div className="flex h-[29px]">
                        <span className="w-[372px] pt-[5px] text-center">Standard Name</span>
                        <div className="ml-[6px] pt-[5px]">
                          <WideButton width="w-[336px]" label={p.std} />
                        </div>
                      </div>
                    )}
                  </div>
                ))}
              </div>

              <Heading className="mt-[27px]" clear="off">Parameter Values</Heading>
              <Heading line clear="on">Platform name: ESP_Bruce_Mooring,ESP_Mack_Mooring</Heading>
              <div className="px-[15px]">
                <div className="mt-[25px] h-[73px] border-b border-[#e3e3e3] font-bold tracking-normal text-[#0088cc]">
                  <Lines rows={["auv", "drifter", "glider", "mooring"]} />
                </div>
                <div className="mt-1 flex flex-col gap-2">
                  {PLATFORMS.map((p) => (
                    <div key={p.name} className="flex h-5 items-center pl-[5px]">
                      <div className="flex h-5 w-[92px] items-center bg-[#c0d3e5] px-[5px]">
                        <div className={`h-[2px] w-full ${p.color}`} />
                      </div>
                      <div className="ml-[94px]">
                        <WideButton width="w-[548px]" label={p.name} primary={p.on} />
                      </div>
                    </div>
                  ))}
                </div>
              </div>
            </section>
          </div>
        </div>
        <div className="w-[14px] shrink-0 border-l border-[#e5e5e5] bg-[#fafafa] pt-[3px] pl-[3px]">
          <div className="h-[1273px] w-2 rounded-full bg-[#c1c1c1]" />
        </div>
      </div>
    </div>
  );
}
